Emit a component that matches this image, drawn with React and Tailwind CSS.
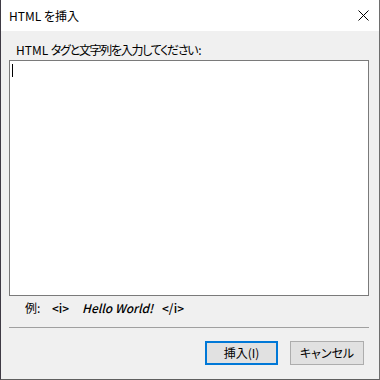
export default function App() {
  const font = "font-['Noto_Sans_CJK_JP','Noto_Sans',sans-serif] [font-feature-settings:'palt']";
  return (
    <div className={`w-[380px] h-[380px] flex flex-col bg-[#f0f0f0] border-l border-l-[#3f3b45] border-r border-r-[#6e6e6e] border-b border-b-[#5f5f5f] text-[12px] text-black ${font}`}>
      {/* Title bar */}
      <div className="h-[31px] bg-white flex items-center justify-between shrink-0">
        <span className="pl-[8px] leading-[16px]">HTML を挿入</span>
        <svg width="11" height="11" viewBox="0 0 11 11" className="mr-[10px]">
          <path d="M0.5 0.5 L10.5 10.5 M10.5 0.5 L0.5 10.5" stroke="#000" strokeWidth="1" fill="none" />
        </svg>
      </div>

      {/* Body */}
      <div className="flex flex-col pl-[8px] pt-[11px]">
        <div className="pl-[7px] h-[16px] leading-[16px]">
          HTML <span className="tracking-[-1.3px]">タグと文字列を入力してください</span>
          <span className="ml-[1px]">:</span>
        </div>

        {/* Text area */}
        <div className="mt-[2px] w-[360px] h-[236px] bg-white border border-[#7a7a7a] pt-[3px] pl-[2px]">
          <div className="w-[1px] h-[13px] bg-black" />
        </div>

        {/* Example */}
        <div className="mt-[4px] h-[16px] leading-[16px] flex items-center pl-[16px]">
          <span className="w-[27px]">例:</span>
          <span className="w-[30px] font-medium">&lt;i&gt;</span>
          <span className="w-[80px] font-medium italic">Hello World!</span>
          <span className="font-medium">&lt;/i&gt;</span>
        </div>

        {/* Separator */}
        <div className="mt-[11px] w-[360px] h-[1px] bg-[#a0a0a0]" />

        {/* Buttons */}
        <div className="mt-[13px] w-[355px] flex justify-end gap-[12px]">
          <button className="w-[73px] h-[24px] bg-[#e1e1e1] border-2 border-[#0078d7] flex items-center justify-center leading-none">
            挿入(I)
          </button>
          <button className="w-[74px] h-[24px] bg-[#e1e1e1] border border-[#adadad] flex items-center justify-center leading-none">
            キャンセル
          </button>
        </div>
      </div>
    </div>
  );
}
